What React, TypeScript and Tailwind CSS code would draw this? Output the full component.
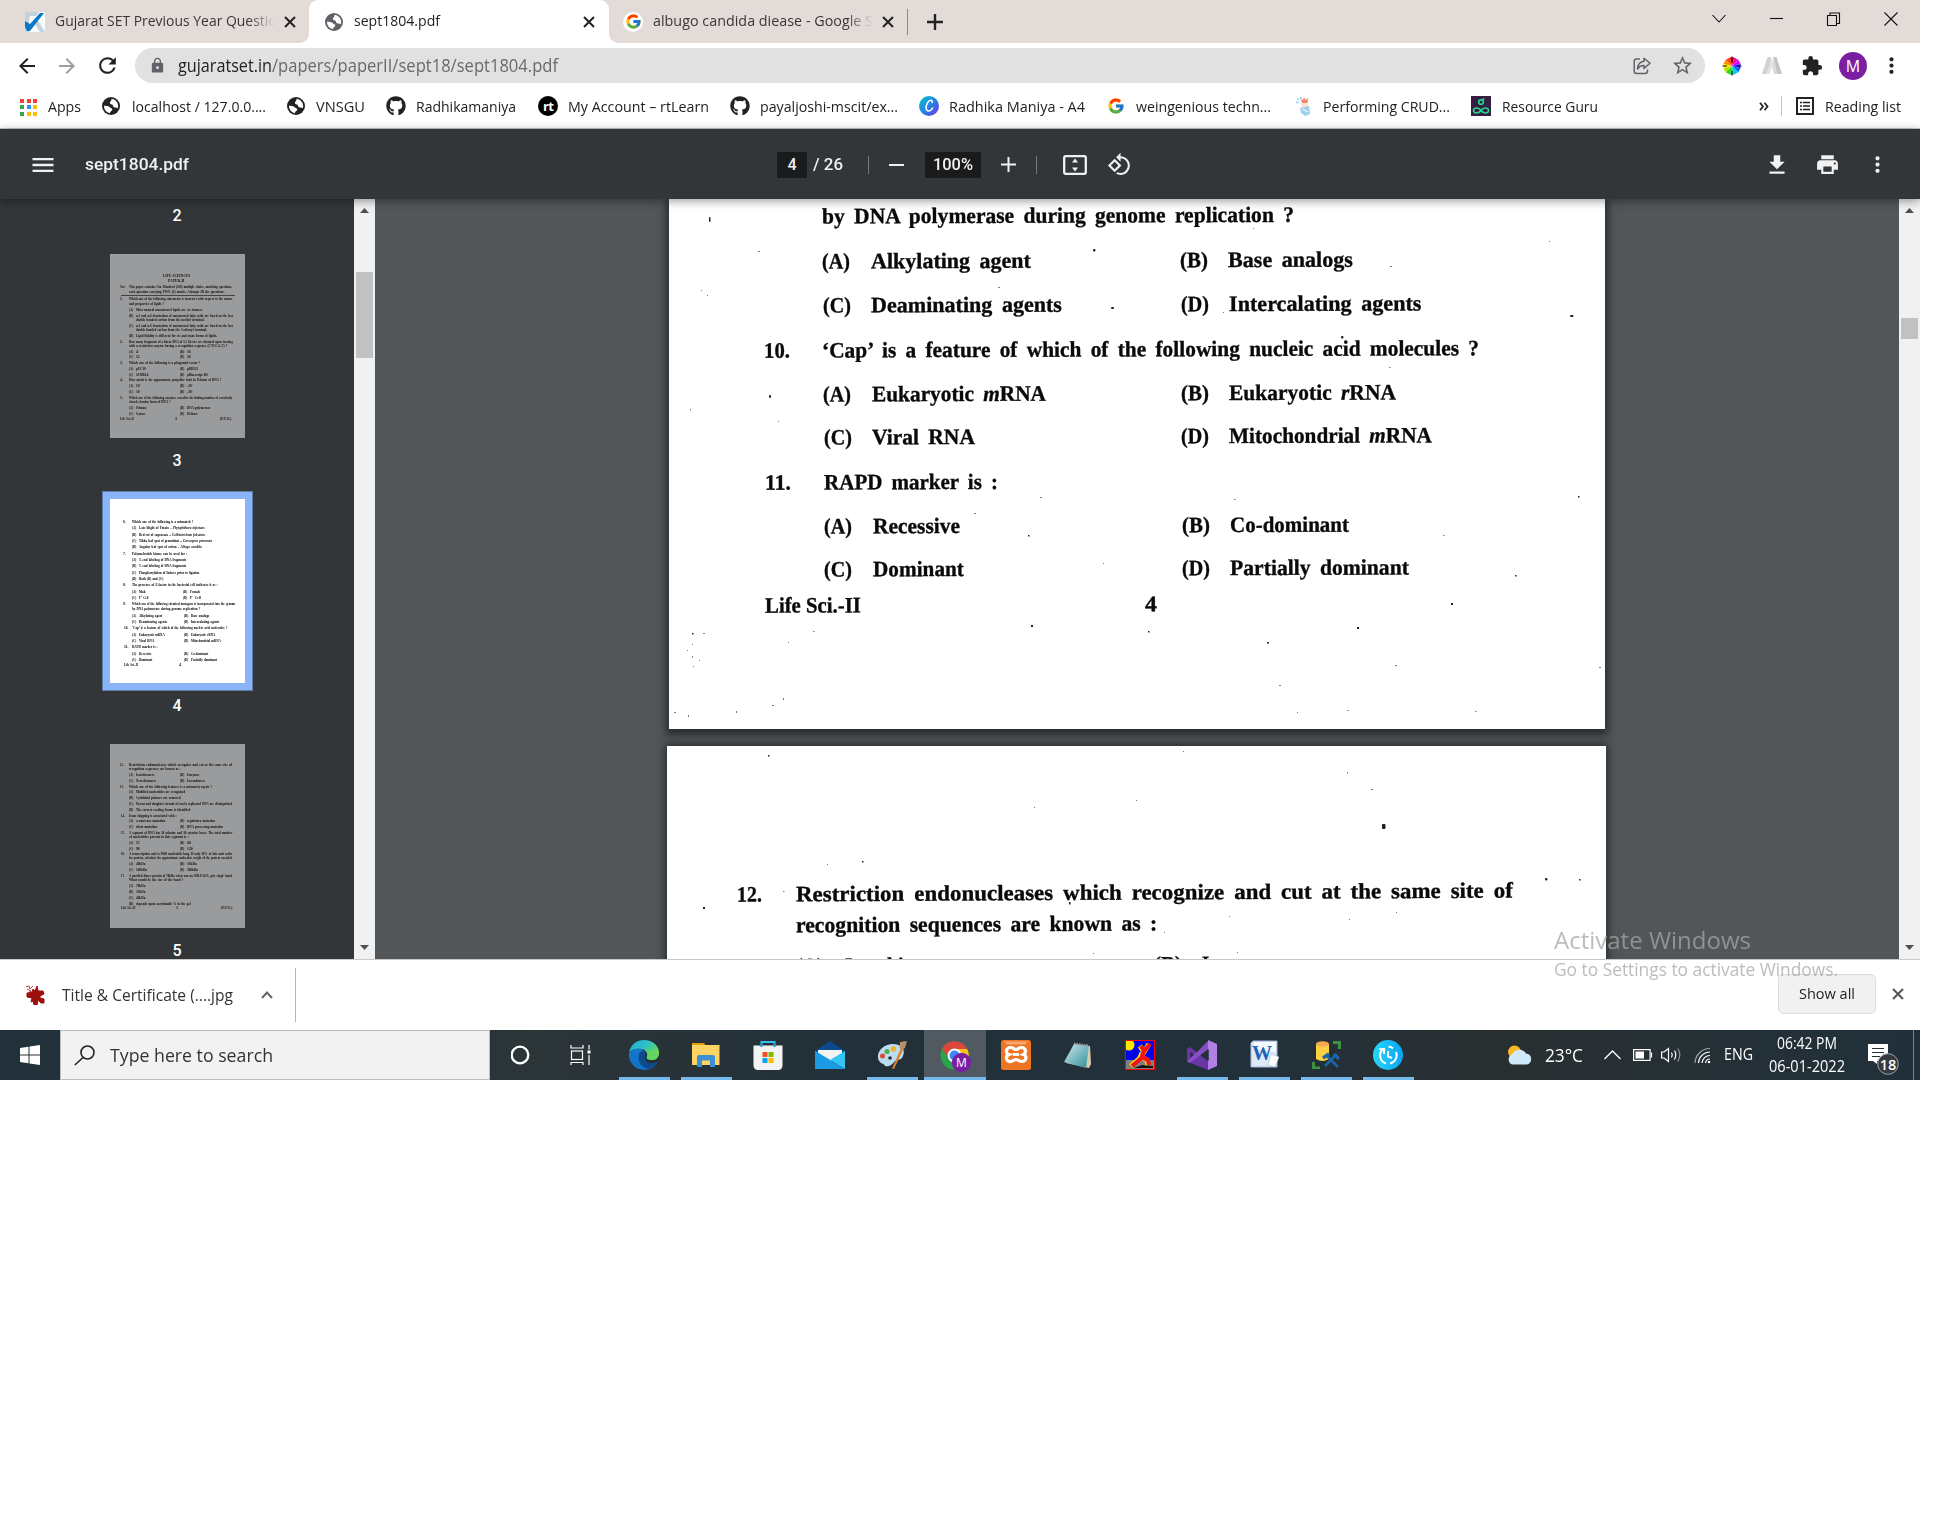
import React, { useLayoutEffect, useRef } from "react";
import { FaGithub } from "react-icons/fa";
import { FcGoogle } from "react-icons/fc";
import {
  MdArrowBack,
  MdArrowForward,
  MdExtension,
  MdFileDownload,
  MdLock,
  MdMenu,
  MdMoreVert,
  MdPrint,
  MdRefresh,
  MdRotate90DegreesCcw,
  MdStarBorder,
} from "react-icons/md";

/* One line of text stretched or squeezed to a given width. */
function Fit({ w, className = "", children }: { w: number; className?: string; children: React.ReactNode }) {
  const ref = useRef<HTMLSpanElement>(null);
  useLayoutEffect(() => {
    const el = ref.current;
    if (!el) return;
    el.style.transform = "none";
    const natural = el.getBoundingClientRect().width;
    if (natural > 0) el.style.transform = `scaleX(${w / natural})`;
  }, [w]);
  return (
    <span className={`block shrink-0 whitespace-nowrap ${className}`} style={{ width: w }}>
      <span ref={ref} className="inline-block origin-left whitespace-pre">
        {children}
      </span>
    </span>
  );
}

type Cell = [x: number, end: number, text: React.ReactNode];
type Line = [y: number, ...cells: Cell[]];

/* Lines of a printed sheet: every line sits on its own centre, cells keep their columns. */
function Sheet({ lines, x0, y0, k = 1, rowClass }: { lines: Line[]; x0: number; y0: number; k?: number; rowClass: string }) {
  let prevY = y0;
  return (
    <>
      {lines.map(([y, ...cells], i) => {
        const mt = (y - prevY) * k;
        prevY = y;
        let prevX = x0;
        return (
          <div key={i} className={`flex h-0 items-center ${rowClass}`} style={{ marginTop: mt }}>
            {cells.map(([a, b, t], j) => {
              const ml = (a - prevX) * k;
              prevX = b;
              return (
                <div key={j} className="shrink-0" style={{ marginLeft: ml }}>
                  <Fit w={(b - a) * k}>{t}</Fit>
                </div>
              );
            })}
          </div>
        );
      })}
    </>
  );
}

const page4: Line[] = [
  [217, [822, 1294, "by DNA polymerase during genome replication ?"]],
  [261.8, [822, 850, "(A)"], [870.6, 1030.6, "Alkylating agent"], [1180, 1208, "(B)"], [1228, 1353, "Base analogs"]],
  [306.3, [822.5, 850.5, "(C)"], [871, 1062, "Deaminating agents"], [1180.5, 1208.5, "(D)"], [1228.5, 1421, "Intercalating agents"]],
  [350.7, [764, 790, "10."], [822, 1479, "‘Cap’ is a feature of which of the following nucleic acid molecules ?"]],
  [395, [823, 851, "(A)"], [872, 1046, <>Eukaryotic <i>m</i>RNA</>], [1181, 1209, "(B)"], [1229, 1396, <>Eukaryotic <i>r</i>RNA</>]],
  [438.2, [823.5, 851.5, "(C)"], [872, 975, "Viral RNA"], [1181, 1209, "(D)"], [1229, 1432, <>Mitochondrial <i>m</i>RNA</>]],
  [483, [765, 791, "11."], [824, 998, "RAPD marker is :"]],
  [526.6, [824, 852, "(A)"], [873, 960, "Recessive"], [1181.5, 1209.5, "(B)"], [1230, 1349, "Co-dominant"]],
  [570, [824, 852, "(C)"], [873, 964, "Dominant"], [1181.5, 1209.5, "(D)"], [1230, 1409, "Partially dominant"]],
  [606, [765, 861, <span className="[word-spacing:0px]">Life Sci.-II</span>], [1145, 1157, "4"]],
];

const page5: Line[] = [
  [894.5, [737, 762, "12."], [795.6, 1512.5, "Restriction endonucleases which recognize and cut at the same site of"]],
  [925.5, [795.6, 1157, "recognition sequences are known as :"]],
  [966.5, [796, 824, "(A)"], [845, 964, "Isoschizomers"], [1154, 1182, "(B)"], [1202, 1275, "Isozymes"]],
];

const specks4: [number, number, number, number][] = [
  [709, 217, 1.5, 5], [758, 251, 2, 1], [1093, 249, 2.5, 2.5], [1111, 307, 3, 2], [1253, 228, 1, 1], [1223, 312, 1, 1],
  [701, 290, 1, 1], [707, 295, 1, 1], [998, 287, 2, 1], [769, 395, 2, 3], [690, 409, 1, 1.5], [778, 421, 1, 1],
  [1040, 497, 2, 1], [974, 513, 2, 1], [1028, 535, 1.5, 1.5], [1234, 499, 1.5, 1], [1103, 563, 1, 1],
  [1031, 625, 2, 2], [1148, 631, 1.5, 1.5], [1267, 642, 2, 1.5], [1279, 685, 2, 1], [692, 633, 1.5, 1.5],
  [703, 633, 2, 1], [692, 644, 1, 1], [687, 650, 1, 1], [692, 656, 1, 1.5], [699, 660, 1, 1], [693, 666, 1, 1],
  [813, 631, 1.5, 1], [788, 642, 1, 1], [772, 705, 2, 1], [783, 698, 1, 2], [736, 711, 1, 2], [674, 712, 2, 1], [688, 715, 1, 2],
  [1549, 241, 1, 1], [1390, 266, 2, 1], [1570, 315, 3.5, 2], [1341, 336, 2.5, 2.5], [1389, 367, 1.5, 1], [1578, 496, 1.5, 1.5],
  [1443, 535, 1.5, 1], [1515, 575, 1.5, 1.5], [1451, 603, 2, 2], [1357, 627, 2, 2], [1395, 665, 2, 1], [1599, 667, 2, 1],
  [1297, 712, 1, 1], [1347, 710, 1.5, 1], [1475, 711, 1.5, 1], [1363, 561, 2, 1.5],
];
const specks5: [number, number, number, number][] = [
  [768, 755, 1.5, 1.5], [1183, 751, 1, 1], [1347, 772, 1, 1.5], [1371, 789, 2, 1], [1136, 800, 1, 1], [1034, 807, 1, 1],
  [1382, 824, 3.5, 5], [827, 864, 1, 1], [862, 861, 1.5, 1.5], [1545, 878, 2.5, 2.5], [1579, 879, 1.5, 1.5], [703, 907, 2, 2],
  [783, 891, 1.5, 1], [1069, 902, 1.5, 2.5], [1349, 919, 1, 1], [1396, 912, 1, 1], [1229, 916, 1, 1], [1164, 932, 1, 1],
  [1093, 953, 1, 1], [1237, 952, 1, 1],
];

function Specks({ items, x0, y0 }: { items: [number, number, number, number][]; x0: number; y0: number }) {
  return (
    <svg className="pointer-events-none absolute inset-0 h-full w-full" fill="#222">
      {items.map(([x, y, w, h], i) => (
        <rect key={i} x={x - x0} y={y - y0} width={w} height={h} rx={w * h > 5 ? 1 : 0} opacity={w * h > 2 ? 1 : 0.6} />
      ))}
    </svg>
  );
}

const thumb3: Line[] = [
  [258, [489, 571, "LIFE SCIENCES"]],
  [274, [504, 553, "PAPER-II"]],
  [292, [361, 380, <i>Note :</i>], [388, 697, "This paper contains One Hundred (100) multiple choice, matching questions,"]],
  [306, [388, 675, "each question carrying TWO (2) marks. Attempt All the questions."]],
  [329, [361, 369, "1."], [386, 697, "Which one of the following statements is incorrect with respect to the nature"]],
  [343, [386, 492, "and properties of lipids ?"]],
  [360, [386, 399, "(A)"], [407, 608, "Most natural unsaturated lipids are cis isomers."]],
  [378, [386, 399, "(B)"], [407, 697, "n-3 and n-6 denotations of unsaturated fatty acids are based on the last"]],
  [391, [407, 612, "double bonded carbon from the methyl terminal."]],
  [408, [386, 399, "(C)"], [407, 697, "n-3 and n-6 denotations of unsaturated fatty acids are based on the last"]],
  [422, [407, 620, "double bonded carbon from the Carboxyl terminal."]],
  [439, [386, 399, "(D)"], [407, 650, "Lipid fluidity is different for cis and trans forms of lipids."]],
  [456, [361, 369, "2."], [386, 697, "How many fragments of a linear DNA of 1.5 kb size are obtained upon treating"]],
  [470, [386, 681, "with a restriction enzyme having a recognition sequence (5'TCGA-3') ?"]],
  [487, [386, 399, "(A)"], [407, 413, "4"], [541, 554, "(B)"], [561, 572, "16"]],
  [504, [386, 399, "(C)"], [407, 418, "12"], [541, 554, "(D)"], [561, 572, "20"]],
  [521, [361, 369, "3."], [386, 600, "Which one of the following is a phagemid vector ?"]],
  [539, [386, 399, "(A)"], [407, 436, "pUC19"], [541, 554, "(B)"], [561, 594, "pBR322"]],
  [556, [386, 399, "(C)"], [407, 444, "λEMBL4"], [541, 554, "(D)"], [561, 624, "pBluescript KS"]],
  [573, [361, 369, "4."], [386, 663, "How much is the approximate propeller twist in B-form of DNA ?"]],
  [591, [386, 399, "(A)"], [407, 421, "16°"], [541, 554, "(B)"], [561, 579, "-16°"]],
  [608, [386, 399, "(C)"], [407, 421, "36°"], [541, 554, "(D)"], [561, 579, "-36°"]],
  [626, [361, 369, "5."], [386, 695, "Which one of the following enzymes can alter the linking number of covalently"]],
  [638, [386, 511, "closed circular form of DNA ?"]],
  [657, [386, 399, "(A)"], [407, 440, "Primase"], [541, 554, "(B)"], [561, 631, "DNA polymerase"]],
  [675, [386, 399, "(C)"], [407, 435, "Gyrase"], [541, 554, "(D)"], [561, 594, "Helicase"]],
  [690, [361, 402, "Life Sci.-II"], [524, 530, "3"], [661, 695, "(P.T.O.)"]],
];

const thumb4: Line[] = [
  [997, [369, 377, "6."], [395, 579, "Which one of the following is a mismatch ?"]],
  [1016, [395, 408, "(A)"], [416, 613, <>Late blight of Potato – <i>Phytophthora infestans</i></>]],
  [1035, [395, 408, "(B)"], [416, 613, <>Red rot of sugarcane – <i>Colletotrichum falcatum</i></>]],
  [1054, [395, 408, "(C)"], [416, 635, <>Tikka leaf spot of groundnut – <i>Cercospora personata</i></>]],
  [1073, [395, 408, "(D)"], [416, 604, <>Angular leaf spot of cotton – <i>Albugo candida</i></>]],
  [1092, [369, 377, "7."], [395, 560, "Polynucleotide kinase can be used for :"]],
  [1111, [395, 408, "(A)"], [416, 558, "3'-end labeling of DNA fragments"]],
  [1130, [395, 408, "(B)"], [416, 558, "5'-end labeling of DNA fragments"]],
  [1149, [395, 408, "(C)"], [416, 597, "Phosphorylation of linkers prior to ligation"]],
  [1168, [395, 408, "(D)"], [416, 489, "Both (B) and (C)"]],
  [1187, [370, 378, "8."], [396, 653, "The presence of F-factor in the bacterial cell indicates it as :"]],
  [1206, [396, 409, "(A)"], [417, 438, "Male"], [550, 563, "(B)"], [571, 602, "Female"]],
  [1225, [396, 409, "(C)"], [417, 445, "F⁺ Cell"], [550, 563, "(D)"], [571, 603, "F⁻ Cell"]],
  [1244, [370, 378, "9."], [396, 707, "Which one of the following chemical mutagens is incorporated into the genome"]],
  [1259, [396, 601, "by DNA polymerase during genome replication ?"]],
  [1278, [396, 409, "(A)"], [417, 487, "Alkylating agent"], [551, 564, "(B)"], [572, 627, "Base analogs"]],
  [1297, [396, 409, "(C)"], [417, 501, "Deaminating agents"], [551, 564, "(D)"], [572, 657, "Intercalating agents"]],
  [1316, [371, 384, "10."], [396, 682, "‘Cap’ is a feature of which of the following nucleic acid molecules ?"]],
  [1335, [396, 409, "(A)"], [417, 494, "Eukaryotic mRNA"], [551, 564, "(B)"], [572, 645, "Eukaryotic rRNA"]],
  [1354, [396, 409, "(C)"], [417, 463, "Viral RNA"], [551, 564, "(D)"], [572, 661, "Mitochondrial mRNA"]],
  [1373, [371, 384, "11."], [396, 473, "RAPD marker is :"]],
  [1392, [396, 409, "(A)"], [418, 456, "Recessive"], [552, 565, "(B)"], [573, 625, "Co-dominant"]],
  [1411, [396, 409, "(C)"], [418, 458, "Dominant"], [552, 565, "(D)"], [573, 651, "Partially dominant"]],
  [1427, [372, 414, "Life Sci.-II"], [536, 542, "4"]],
];

const thumb5: Line[] = [
  [225, [361, 372, "12."], [386, 695, "Restriction endonucleases which recognize and cut at the same site of"]],
  [239, [386, 541, "recognition sequences are known as :"]],
  [257, [386, 399, "(A)"], [407, 462, "Isoschizomers"], [541, 554, "(B)"], [561, 598, "Isozymes"]],
  [274, [386, 399, "(C)"], [407, 467, "Neoschizomers"], [541, 554, "(D)"], [561, 615, "Isocaudomers"]],
  [291, [361, 372, "13."], [386, 635, "Which one of the following features is a mismatch repair ?"]],
  [308, [386, 399, "(A)"], [407, 555, "Modified nucleotides are recognized"]],
  [326, [386, 399, "(B)"], [407, 541, "Cytidinial primers are removed"]],
  [343, [386, 399, "(C)"], [407, 696, "Parent and daughter strands of newly replicated DNA are distinguished"]],
  [360, [386, 399, "(D)"], [407, 570, "The correct reading frame is identified"]],
  [378, [362, 373, "14."], [386, 529, "Exon skipping is associated with :"]],
  [395, [386, 399, "(A)"], [407, 495, "a nonsense mutation"], [541, 554, "(B)"], [561, 645, "regulatory mutation"]],
  [412, [386, 399, "(C)"], [407, 471, "silent mutation"], [541, 554, "(D)"], [561, 669, "RNA processing mutation"]],
  [429, [362, 373, "15."], [386, 696, "A segment of DNA has 30 adenine and 30 cytosine bases. The total number"]],
  [442, [386, 565, "of nucleotides present in this segment is :"]],
  [460, [386, 399, "(A)"], [407, 418, "15"], [541, 554, "(B)"], [561, 573, "60"]],
  [477, [386, 399, "(C)"], [407, 418, "90"], [541, 554, "(D)"], [561, 578, "120"]],
  [494, [362, 373, "16."], [386, 696, "A transcription unit is 9000 nucleotide long. If only 10% of this unit codes"]],
  [507, [386, 696, "for protein, calculate the approximate molecular weight of the protein encoded."]],
  [525, [386, 399, "(A)"], [407, 435, "40kDa"], [541, 554, "(B)"], [561, 590, "33kDa"]],
  [542, [386, 399, "(C)"], [407, 440, "100kDa"], [541, 554, "(D)"], [561, 594, "300kDa"]],
  [560, [362, 373, "17."], [386, 696, "A purified dimer protein of 70kDa when run on SDS-PAGE, give single band."]],
  [573, [386, 549, "What would be the size of the band ?"]],
  [591, [386, 399, "(A)"], [407, 435, "70kDa"]],
  [608, [386, 399, "(B)"], [407, 435, "35kDa"]],
  [626, [386, 399, "(C)"], [407, 435, "40kDa"]],
  [643, [386, 399, "(D)"], [407, 571, "depends upon acrylamide % in the gel"]],
  [657, [362, 405, "Life Sci.-II"], [527, 533, "5"], [664, 698, "(P.T.O.)"]],
];

const THIRD = 1 / 3;
const tiny = "font-['Liberation_Serif'] text-[4.8px] leading-none font-bold [word-spacing:0.5px]";

function CloseX({ s = 12, sw = 2, c = "#222" }: { s?: number; sw?: number; c?: string }) {
  return (
    <svg width={s} height={s} viewBox="0 0 12 12" className="shrink-0" stroke={c} strokeWidth={sw}>
      <path d="M1 1L11 11M11 1L1 11" />
    </svg>
  );
}

function Globe({ className = "" }: { className?: string }) {
  return (
    <svg width="18" height="18" viewBox="0 0 18 18" className={`shrink-0 ${className}`}>
      <circle cx="9" cy="9" r="9" fill="currentColor" />
      <path d="M9.500 1.800C12 2 14.500 3.800 15.500 6C16.300 8 16.400 9.500 15.800 11.200C14.500 10.500 13 11 11.500 9.800C10.500 9 11.500 8 10 7.500C8.500 7.200 7.500 6.500 8 5.200C8.500 4 9.800 4 9.500 1.800z" fill="#fff" />
      <path d="M2 8.800C4 9 6 8.800 7.500 10C8.500 11 10.500 11.300 10.300 12.800C10 14.200 8 14 7.800 16.200C4.500 15.700 1.900 12.500 2 8.800z" fill="#fff" />
    </svg>
  );
}

function TabBar() {
  return (
    <div className="flex h-[43px] items-center bg-[#e3dbd8] text-[15px] text-[#3a3738]">
      <div className="flex w-[309px] shrink-0 items-center pl-[25px]">
        <svg width="20" height="20" viewBox="0 0 20 20" className="shrink-0">
          <rect width="20" height="20" fill="#f7fafc" />
          <path d="M0 0H14L11 4H5L4 8V20H0z" fill="#c5d2da" />
          <path d="M12.500 8L20 20H15L10 12z" fill="#c5d2da" />
          <path d="M0 9L5 12L15 1L19 1L5 19L2 19L0 15z" fill="#0b77c9" />
        </svg>
        <div className="-mt-[2px] ml-[10px] w-[220px] overflow-hidden [mask-image:linear-gradient(to_right,black_88%,transparent)]">
          <Fit w={220}>Gujarat SET Previous Year Questic</Fit>
        </div>
        <span className="ml-[9px]"><CloseX /></span>
      </div>
      <div className="relative flex h-[43px] w-[300px] shrink-0 items-center rounded-t-[9px] bg-white pl-4 text-[#222]">
        <div className="absolute bottom-0 -left-[9px] h-[9px] w-[9px] bg-[radial-gradient(circle_at_0_0,transparent_8.5px,white_9px)]" />
        <div className="absolute -right-[9px] bottom-0 h-[9px] w-[9px] bg-[radial-gradient(circle_at_100%_0,transparent_8.5px,white_9px)]" />
        <Globe className="text-[#5f6368]" />
        <Fit w={86} className="-mt-[2px] ml-[11px]">sept1804.pdf</Fit>
        <span className="ml-[143px]"><CloseX /></span>
      </div>
      <div className="flex w-[298px] shrink-0 items-center pl-[14px]">
        <span className="flex h-5 w-5 shrink-0 items-center justify-center rounded-full bg-white"><FcGoogle size={17} /></span>
        <div className="-mt-[2px] ml-[10px] w-[220px] overflow-hidden [mask-image:linear-gradient(to_right,black_88%,transparent)]">
          <Fit w={220}>albugo candida diease - Google S</Fit>
        </div>
        <span className="ml-[9px]"><CloseX /></span>
      </div>
      <div className="h-[26px] w-[1px] shrink-0 bg-[#8d8887]" />
      <svg width="16" height="16" viewBox="0 0 16 16" className="ml-[19px] shrink-0" stroke="#222" strokeWidth="2.4"><path d="M8 0V16M0 8H16" /></svg>
      <div className="ml-auto flex items-center pr-[22px] pb-[5px]">
        <svg width="186" height="14" viewBox="0 0 186 14" fill="none" stroke="#111" strokeWidth="1.1">
          <path d="M.5 3L7 10L13.500 3" />
          <path d="M58 6.500H71" />
          <path d="M115.500 3.500H124.500V13.500H115.500zM118 3.500V1H127.500V11.500H124.500" />
          <path d="M172.500 .5L185.500 13.500M185.500 .5L172.500 13.500" />
        </svg>
      </div>
    </div>
  );
}

function AddressBar() {
  const hues = ["#ff0000", "#ff00a8", "#d400ff", "#3a1cff", "#0066ff", "#00c8ff", "#00e676", "#35d800", "#b4e000", "#ffe600", "#ff9100", "#ff4a00"];
  return (
    <div className="flex h-[45px] items-center bg-white">
      <MdArrowBack size={24} className="ml-[15px] shrink-0 text-[#222]" />
      <MdArrowForward size={24} className="ml-4 shrink-0 text-[#9d9d9d]" />
      <MdRefresh size={25} className="ml-4 shrink-0 text-[#222]" />
      <div className="ml-[15px] flex h-[35px] w-[1570px] shrink-0 items-center rounded-full bg-[#e1e1e1] text-[17.5px]">
        <MdLock size={17} className="ml-[14px] shrink-0 text-[#5f6368]" />
        <Fit w={94} className="ml-3 text-[#222]">gujaratset.in</Fit>
        <Fit w={286} className="text-[#6a6a6a]">/papers/paperII/sept18/sept1804.pdf</Fit>
        <svg width="18" height="18" viewBox="0 0 18 18" className="ml-auto" fill="none" stroke="#5f6368" strokeWidth="1.5">
          <path d="M7 2H3.500Q1.200 2 1.200 4.500V14Q1.200 16.500 3.500 16.500H12Q14.500 16.500 14.500 14V12.500" />
          <path d="M11 1.200L17 6.300L11 11.400V8.600Q7 8.400 4.500 12Q5 5 11 4.300z" strokeLinejoin="round" />
        </svg>
        <MdStarBorder size={23} className="mr-[11px] ml-5 text-[#5f6368]" />
      </div>
      <svg width="20" height="20" viewBox="-10 -10 20 20" className="ml-[17px] shrink-0">
        {hues.map((c, i) => {
          const a = ((i * 30 - 105) * Math.PI) / 180;
          const b = ((i * 30 - 75) * Math.PI) / 180;
          return <path key={i} fill={c} d={`M0 0L${8.8 * Math.cos(a)} ${8.8 * Math.sin(a)}L${8.8 * Math.cos(b)} ${8.8 * Math.sin(b)}z`} />;
        })}
        <path d="M0 -9.500V-4M0 9.500V5M-9.500 0H-5M9.500 0H5" stroke="#111" strokeWidth="1.200" />
      </svg>
      <svg width="20" height="17" viewBox="0 0 20 17" className="ml-5 shrink-0">
        <path d="M0 17L5.500 0H9L9.500 5L4.500 17z" fill="#d2d2d2" />
        <path d="M4.500 17L9.500 4L10 9L8 17z" fill="#e4e4e4" />
        <path d="M11 0H14.500L20 17H15z" fill="#c4c4c4" />
        <path d="M10.500 1L15 17H12L10 8z" fill="#d8d8d8" />
      </svg>
      <MdExtension size={22} className="ml-[19px] shrink-0 text-[#222]" />
      <span className="ml-4 flex h-7 w-7 shrink-0 items-center justify-center rounded-full bg-[#7b1fa2] text-base text-white">M</span>
      <MdMoreVert size={25} className="ml-[12px] shrink-0 text-[#222]" />
    </div>
  );
}

function BookmarkBar() {
  const apps = ["#f44336", "#f44336", "#f44336", "#34a853", "#2196f3", "#fbbc05", "#34a853", "#fbbc05", "#fbbc05"];
  return (
    <div className="flex h-[41px] shrink-0 items-center border-b border-[#c8c8c8] bg-white pb-[4px] text-[15px] text-[#222]">
      <div className="mt-[2px] ml-5 grid w-[17px] shrink-0 grid-cols-3 gap-[2.500px]">
        {apps.map((c, i) => (
          <span key={i} className="h-[4px] w-[4px]" style={{ backgroundColor: c }} />
        ))}
      </div>
      <Fit w={33} className="ml-[11px]">Apps</Fit>
      <Globe className="ml-[21px]" />
      <Fit w={134} className="ml-3">localhost / 127.0.0....</Fit>
      <Globe className="ml-[21px]" />
      <Fit w={49} className="ml-[11px]">VNSGU</Fit>
      <FaGithub size={20} className="ml-[21px] shrink-0" />
      <Fit w={100} className="ml-[10px]">Radhikamaniya</Fit>
      <span className="ml-[22px] flex h-5 w-5 shrink-0 items-center justify-center rounded-full bg-black text-[13px] leading-none font-bold tracking-tighter text-white">rt</span>
      <Fit w={141} className="ml-[10px]">My Account – rtLearn</Fit>
      <FaGithub size={20} className="ml-[21px] shrink-0" />
      <Fit w={138} className="ml-[10px]">payaljoshi-mscit/ex...</Fit>
      <svg width="20" height="20" viewBox="0 0 20 20" className="ml-[21px] shrink-0">
        <defs>
          <linearGradient id="canva" x1="0" y1="0" x2="1" y2="1">
            <stop offset="0" stopColor="#00c9cc" /><stop offset=".55" stopColor="#2a7de1" /><stop offset="1" stopColor="#7d2ae8" />
          </linearGradient>
        </defs>
        <circle cx="10" cy="10" r="10" fill="url(#canva)" />
        <path d="M13.300 6.500C13.700 3.700 10.600 3.500 8.500 6.800C6.300 10.500 6.600 15 9.600 15C11.600 15 12.900 13.300 13.600 12" fill="none" stroke="#fff" strokeWidth="1.500" strokeLinecap="round" />
      </svg>
      <Fit w={136} className="ml-[10px]">Radhika Maniya - A4</Fit>
      <FcGoogle size={18} className="ml-[22px] shrink-0" />
      <Fit w={135} className="ml-[11px]">weingenious techn...</Fit>
      <svg width="16" height="20" viewBox="0 0 16 20" className="ml-[25px] shrink-0">
        <path d="M6 2Q1 2 1.500 8" fill="none" stroke="#a8dcf2" strokeWidth="2.500" strokeDasharray="2 1" />
        <path d="M8 1L9.500 4L12 2L11.500 7H6L5 3L7 4z" fill="#f0836a" />
        <path d="M5 7H12V12H6z" fill="#fbe3d8" />
        <path d="M4 12L13 10L14 18L9 20L5 17z" fill="#9fd0ee" />
        <path d="M6 13L12 16" stroke="#fff" />
      </svg>
      <Fit w={127} className="ml-[11px]">Performing CRUD...</Fit>
      <svg width="20" height="20" viewBox="0 0 20 20" className="ml-[21px] shrink-0" fill="none" stroke="#1ee08a" strokeWidth="1.600">
        <rect width="20" height="20" fill="#352044" stroke="none" />
        <circle cx="10" cy="6" r="2.300" /><path d="M11.500 4L13 2.500" />
        <path d="M10 14.500C8 11.500 2.500 11 2.500 14.500C2.500 18 8 17.500 10 14.500C12 11.500 17.500 11 17.500 14.500C17.500 18 12 17.500 10 14.500z" />
      </svg>
      <Fit w={96} className="ml-[11px]">Resource Guru</Fit>
      <svg width="10" height="9" viewBox="0 0 10 9" className="ml-[161px] shrink-0" fill="none" stroke="#222" strokeWidth="1.800"><path d="M1 .8L4 4.500L1 8.200M5.500 .8L8.500 4.500L5.500 8.200" /></svg>
      <div className="ml-3 h-5 w-px bg-[#c4c4c4]" />
      <svg width="18" height="18" viewBox="0 0 18 18" className="ml-[14px] shrink-0" fill="none" stroke="#222" strokeWidth="2">
        <rect x="1" y="1" width="16" height="16" /><path d="M7 5.500H14M7 9H14M7 12.500H14M4 5.500H6M4 9H6M4 12.500H6" strokeWidth="1.700" />
      </svg>
      <Fit w={76} className="ml-[11px]">Reading list</Fit>
    </div>
  );
}

function PdfToolbar() {
  return (
    <div className="relative z-10 flex h-[70px] shrink-0 items-center bg-[#323639] pt-px font-['Roboto'] text-[17px] font-medium text-[#f1f1f1] shadow-[0_2px_9px_rgba(0,0,0,0.4)]">
      <MdMenu size={28} className="ml-[29px] shrink-0" />
      <Fit w={104} className="ml-[28px]">sept1804.pdf</Fit>
      <span className="ml-[588px] flex h-[26px] w-[30px] shrink-0 items-center justify-center bg-[#191b1c] text-[16px]">4</span>
      <Fit w={30} className="ml-[6px] text-[16px]">/ 26</Fit>
      <div className="ml-[25px] h-[18px] w-px bg-[#77797b]" />
      <div className="ml-5 h-[2px] w-[15px] shrink-0 bg-[#f1f1f1]" />
      <span className="ml-[21px] flex h-[26px] w-14 shrink-0 items-center justify-center bg-[#191b1c] text-[16px]"><Fit w={40}>100%</Fit></span>
      <svg width="15" height="15" viewBox="0 0 15 15" className="ml-5 shrink-0" stroke="#f1f1f1" strokeWidth="2"><path d="M7.500 0V15M0 7.500H15" /></svg>
      <div className="ml-5 h-[18px] w-px shrink-0 bg-[#77797b]" />
      <svg width="24" height="20" viewBox="0 0 24 20" className="ml-[26px] shrink-0" fill="#f1f1f1">
        <rect x="1.200" y="1.200" width="21.600" height="17.600" rx="1.500" fill="none" stroke="#f1f1f1" strokeWidth="2.300" />
        <path d="M12 3.500L15 7.500H9zM12 16.500L15 12.500H9z" />
      </svg>
      <MdRotate90DegreesCcw size={25} className="ml-[20px] shrink-0" />
      <MdFileDownload size={26} className="ml-auto shrink-0" />
      <MdPrint size={25} className="ml-[25px] shrink-0" />
      <MdMoreVert size={25} className="mr-[30px] ml-[25px] shrink-0" />
    </div>
  );
}

function ScrollBar({ thumb }: { thumb: string }) {
  return (
    <div className="flex h-full w-[21px] shrink-0 flex-col items-center bg-[#f1f1f1]">
      <svg width="9" height="5" viewBox="0 0 9 5" className="mt-[9px] shrink-0" fill="#505050"><path d="M0 5L4.500 0L9 5z" /></svg>
      <div className={`w-[17px] shrink-0 bg-[#c1c1c1] ${thumb}`} />
      <svg width="9" height="5" viewBox="0 0 9 5" className="mt-auto mb-[9px] shrink-0" fill="#505050"><path d="M0 0L4.500 5L9 0z" /></svg>
    </div>
  );
}

function Thumbnails() {
  return (
    <div className="flex w-[354px] shrink-0 flex-col overflow-hidden bg-[#323639] font-['Roboto'] text-[16px] leading-5 font-medium text-white">
      <div className="mt-[7px] flex h-5 w-[354px] shrink-0 justify-center">2</div>
      <div className={`mt-7 ml-[110px] h-[184px] w-[135px] shrink-0 overflow-hidden bg-[#9a9b9d] pt-px text-[#111] ${tiny}`}>
        <div className="-mt-px">
          <Sheet lines={thumb3.slice(0, 4)} x0={330} y0={192} k={THIRD} rowClass="" />
          <div className="mx-[10.500px] mt-[3px] h-px bg-[#444]" />
          <Sheet lines={thumb3.slice(4)} x0={330} y0={318} k={THIRD} rowClass="" />
        </div>
      </div>
      <div className="mt-[13px] flex h-5 w-[354px] shrink-0 justify-center">3</div>
      <div className="mt-[20px] ml-[102px] h-[200px] w-[151px] shrink-0 border border-[#5f7ba8] bg-[#8ab4f8] p-[7px]">
        <div className={`h-[184px] w-[135px] overflow-hidden bg-white pt-px text-black ${tiny}`}>
          <div className="-mt-px">
            <Sheet lines={thumb4} x0={330} y0={927} k={THIRD} rowClass="" />
          </div>
        </div>
      </div>
      <div className="mt-[5px] flex h-5 w-[354px] shrink-0 justify-center">4</div>
      <div className={`mt-7 ml-[110px] h-[184px] w-[135px] shrink-0 overflow-hidden bg-[#9a9b9d] pt-px text-[#111] ${tiny}`}>
        <div className="-mt-px">
          <Sheet lines={thumb5} x0={330} y0={162} k={THIRD} rowClass="" />
        </div>
      </div>
      <div className="mt-[13px] flex h-5 w-[354px] shrink-0 justify-center">5</div>
    </div>
  );
}

const print = "font-['Liberation_Serif'] text-[22px] leading-none font-bold text-[#0a0a0a] [word-spacing:4px] [-webkit-text-stroke:0.35px_#0a0a0a]";

function Viewer() {
  return (
    <div className="flex min-w-0 flex-1 flex-col overflow-hidden bg-[#525659]">
      <div className={`relative ml-[294px] h-[530px] w-[936px] shrink-0 bg-white pt-px shadow-[0_3px_8px_3px_rgba(0,0,0,0.5)] ${print}`}>
        <div className="-mt-px">
          <Sheet lines={page4} x0={669} y0={199} rowClass="origin-left -rotate-[0.2deg]" />
        </div>
        <Specks items={specks4} x0={669} y0={199} />
      </div>
      <div className={`relative mt-[17px] ml-[292px] h-[240px] w-[939px] shrink-0 bg-white pt-px shadow-[0_0_8px_2px_rgba(0,0,0,0.5)] ${print}`}>
        <div className="-mt-px">
          <Sheet lines={page5} x0={667} y0={746} rowClass="origin-left -rotate-[0.3deg]" />
        </div>
        <Specks items={specks5} x0={667} y0={746} />
      </div>
    </div>
  );
}

function DownloadBar() {
  return (
    <div className="flex h-[71px] shrink-0 items-center border-t border-[#c8c8c8] bg-white text-[#333]">
      <svg width="20" height="20" viewBox="0 0 20 20" className="ml-[25px] shrink-0">
        <path d="M2 8L7 7L8 4L10 6L12 1L13 6L18 6L19 9L15 11L15 13L19 14V18L16 18L13 15L12 20L9 20L8 16L6 17L7 13L2 12z" fill="#9d0f0c" stroke="#9d0f0c" strokeLinejoin="round" />
        <path d="M1 2L4 1L5 4L8 1M2 4L6 6L3 8" stroke="#b3423f" fill="none" />
      </svg>
      <Fit w={171} className="ml-[17px] text-[17px]">Title &amp; Certificate (....jpg</Fit>
      <svg width="12" height="8" viewBox="0 0 12 8" className="ml-7 shrink-0" fill="none" stroke="#666" strokeWidth="2"><path d="M1 7L6 1.500L11 7" /></svg>
      <div className="ml-[22px] h-[54px] w-px bg-[#b5b5b5]" />
      <div className="mb-[2px] ml-auto flex h-10 w-[98px] items-center justify-center rounded-[5px] border border-[#dadce0] bg-[#f1f1f1] pb-px text-[15px] text-[#222]">
        <Fit w={56}>Show all</Fit>
      </div>
      <span className="mr-[16px] mb-[2px] ml-4"><CloseX c="#555" /></span>
    </div>
  );
}

function TaskIcon({ open, active, children }: { open?: boolean; active?: boolean; children: React.ReactNode }) {
  return (
    <div className={`relative flex h-[50px] w-[62px] shrink-0 items-center justify-center pr-[2px] ${active ? "bg-[#505a60]" : ""}`}>
      {children}
      {open && <div className={`absolute bottom-0 h-[3px] bg-[#76b9ed] ${active ? "inset-x-0" : "left-[5px] w-[51px]"}`} />}
    </div>
  );
}

function Taskbar() {
  return (
    <div className="flex h-[50px] shrink-0 items-center bg-[linear-gradient(to_right,#21313a,#2c3538_28%,#22303a_45%,#22303a_65%,#292f31_78%,#20303a)] text-white">
      <svg width="20" height="20" viewBox="0 0 20 20" className="ml-5 shrink-0" fill="#fff">
        <path d="M0 3L8.500 1.700V9.500H0zM9.500 1.500L20 0V9.500H9.500zM0 10.500H8.500V18.300L0 17zM9.500 10.500H20V20L9.500 18.500z" />
      </svg>
      <div className="ml-5 flex h-[50px] w-[430px] shrink-0 items-center border border-[#bdbdbd] bg-[#f2f2f2] text-[19px] text-[#333]">
        <svg width="21" height="21" viewBox="0 0 21 21" className="ml-[13px] shrink-0" fill="none" stroke="#222" strokeWidth="1.600"><circle cx="13.500" cy="7.500" r="6.500" /><path d="M9 12.500L.8 20" /></svg>
        <Fit w={163} className="ml-[15px]">Type here to search</Fit>
      </div>
      <TaskIcon><svg width="20" height="20" viewBox="0 0 20 20" className="ml-[2px]"><circle cx="9" cy="10" r="8.300" fill="none" stroke="#fff" strokeWidth="2.300" /></svg></TaskIcon>
      <TaskIcon>
        <svg width="22" height="20" viewBox="0 0 22 20" className="-ml-[2px]" fill="none" stroke="#fff" strokeWidth="1.200">
          <rect x="1.500" y="6" width="11" height="8.500" /><path d="M1 0V3H13V0M1 20V17.500H13V20M19 0V4.500M19 10V20" /><rect x="17.500" y="5.500" width="3" height="3" fill="#fff" stroke="none" />
        </svg>
      </TaskIcon>
      <TaskIcon open>
        <svg width="30" height="30" viewBox="0 0 30 30">
          <defs>
            <linearGradient id="edgeTop" x1="0" y1="0" x2="1" y2=".6"><stop offset="0" stopColor="#27a8dd" /><stop offset=".55" stopColor="#2fc2c5" /><stop offset="1" stopColor="#70e04e" /></linearGradient>
            <linearGradient id="edgeLow" x1="0" y1="0" x2="0" y2="1"><stop offset="0" stopColor="#1478cc" /><stop offset="1" stopColor="#1272c8" /></linearGradient>
          </defs>
          <path d="M0 15A15 15 0 0 0 15 30C21 30 26 27 28.500 22L18 15L10 6L0 13z" fill="url(#edgeLow)" />
          <path d="M0 13C1.500 4 8 0 15 0C25 0 30 7 30 13C30 18 26 20.500 22 20C18.500 19.700 17 18.500 18 16.500C19.500 13 15.500 8.500 10 8.500C5 8.500 1 11 0 13z" fill="url(#edgeTop)" />
          <path d="M10 14C8 20 12 28 20 29C25 27.500 28 24 28.500 22C22 25 15.500 23 15.500 17C15.500 14 17 13 16 12C13.500 10.500 10.800 11.500 10 14z" fill="#0d4a8d" />
          <path d="M18 16.500C17 18.500 18.500 19.700 22 20C26 20.500 28.500 19.300 29.500 17L28.500 22C22 25 15.500 23 15.500 17C15.500 15 16.500 13.500 16.500 12.500C18 13.500 18.500 15 18 16.500z" fill="#22303a" />
          <path d="M18 16.500C17 18.500 18.500 19.700 22 20C26 20.500 29 18.500 29.800 15L20 8z" fill="#62d560" />
        </svg>
      </TaskIcon>
      <TaskIcon open>
        <svg width="28" height="24" viewBox="0 0 28 24">
          <path d="M0 0H12L14 3H0z" fill="#e0a000" /><rect y="2" width="27.500" height="20" fill="#ffd464" />
          <path d="M5 24V14Q5 12 7 12H21Q23 12 23 14V24H18V17.500H10V24z" fill="#3c8fd4" />
        </svg>
      </TaskIcon>
      <TaskIcon>
        <svg width="30" height="30" viewBox="0 0 30 30">
          <path d="M8.500 8V2H21.500V8" fill="none" stroke="#35bdf2" strokeWidth="2" />
          <path d="M.5 5.500H29.500V25Q29.500 30 25 30H5Q.5 30 .5 25z" fill="#f3f3f3" />
          <path d="M8.500 7V3M21.500 7V3" stroke="#1a8fd0" strokeWidth="2" />
          <path d="M9.500 12H14.500V17H9.500z" fill="#f25022" /><path d="M15.500 12H20.500V17H15.500z" fill="#7fba00" /><path d="M9.500 18H14.500V23H9.500z" fill="#00a4ef" /><path d="M15.500 18H20.500V23H15.500z" fill="#ffb900" />
        </svg>
      </TaskIcon>
      <TaskIcon>
        <svg width="30" height="28" viewBox="0 0 30 28">
          <path d="M0 10L15 0L30 10V13H0z" fill="#0b4a8f" /><path d="M3 9H27V20H3z" fill="#f4f4f4" /><path d="M0 10L15 19L0 28z" fill="#1f97e0" /><path d="M30 10L15 19L30 28z" fill="#35c3f3" /><path d="M0 10V28H30L15 19z" fill="#1b9be4" />
        </svg>
      </TaskIcon>
      <TaskIcon open>
        <svg width="31" height="28" viewBox="0 0 31 28">
          <path d="M1 17C0 9 8 3 16 3C24 3 29 8 26 15C24 20 20 18 17 21C15 24 12 26 8 25C7 22 2 23 1 17z" fill="#bcdcf0" />
          <circle cx="5.500" cy="15" r="2.500" fill="#d9483b" /><circle cx="10" cy="10.500" r="2.600" fill="#52b04c" /><circle cx="16.500" cy="8" r="2.800" fill="#f5b32d" /><circle cx="13" cy="17" r="1.800" fill="#22303a" />
          <path d="M24 7L26.500 8L17 28L15 27.500z" fill="#d9822d" /><path d="M23 1L30 0L28 7L25 9L22.500 7z" fill="#b98f68" />
        </svg>
      </TaskIcon>
      <TaskIcon open active>
        <svg width="32" height="32" viewBox="0 0 32 32" className="mt-1 ml-[3px]">
          <circle cx="14.500" cy="14.500" r="14" fill="#2ba24c" />
          <path d="M2 8A14 14 0 0 1 27.500 9H14.500L9 17z" fill="#d9483b" />
          <path d="M28 10A14 14 0 0 1 16 28.500L20 17L15 8H27z" fill="#fbc116" />
          <circle cx="14.500" cy="14.500" r="6" fill="#4285f4" stroke="#fff" strokeWidth="1.800" />
          <circle cx="21.500" cy="21.500" r="9.700" fill="#7b1fa2" />
          <text x="21.500" y="26" textAnchor="middle" fontSize="12" fontFamily="Open Sans" fill="#fff">M</text>
        </svg>
      </TaskIcon>
      <TaskIcon>
        <svg width="30" height="30" viewBox="0 0 30 30">
          <rect width="30" height="30" rx="2.500" fill="#ee7623" /><path d="M3 1.500H27L24 4.500H6z" fill="#f7a871" />
          <path d="M10 7.500C4 7.500 4.500 13.500 8 14.500C4 16 5 22 10 21.500C12.500 21 13 19.500 15 19.500C17 19.500 18 21.500 20.500 21.500C26 21.500 26 15.500 22.500 14.500C25.500 13 25.500 7.500 20 7.500C17.500 7.500 17 9.500 15 9.500C13 9.500 12.500 7.500 10 7.500z" fill="none" stroke="#fff" strokeWidth="3.200" />
          <path d="M12 14.500H18" stroke="#fff" strokeWidth="3" />
        </svg>
      </TaskIcon>
      <TaskIcon>
        <svg width="28" height="27" viewBox="0 0 28 27">
          <defs><linearGradient id="note" x1="0" y1="0" x2="1" y2="1"><stop offset="0" stopColor="#cfe7ec" /><stop offset="1" stopColor="#2e8f9c" /></linearGradient></defs>
          <path d="M10 2L26 4L27 22L25 26L2 21z" fill="#d8cdb0" /><path d="M10 2L25 4L22 26L0 20z" fill="url(#note)" /><path d="M10 1.500L25 3.500" stroke="#999" strokeWidth="2" strokeDasharray="1.500 1" />
        </svg>
      </TaskIcon>
      <TaskIcon>
        <svg width="30" height="30" viewBox="0 0 30 30">
          <rect width="30" height="30" fill="#0404e8" /><rect y="20" width="30" height="10" fill="#808080" /><circle cx="4" cy="5" r="5.500" fill="#ffe800" />
          <path d="M9 28L17 25L28 26V28z" fill="#111" />
          <path d="M15 6L19 12L24 4M17 13L15 18L6 26M16 17L22 20L23 25" fill="none" stroke="#ffe800" strokeWidth="5" /><path d="M16 6L20 12M25 4L18.500 12L16.500 18L7 26M17 17L23 20L24 25" fill="none" stroke="#f01414" strokeWidth="4.200" />
          <rect x=".5" y=".5" width="29" height="29" fill="none" stroke="#f00" />
        </svg>
      </TaskIcon>
      <TaskIcon open>
        <svg width="30" height="30" viewBox="0 0 30 30">
          <path fillRule="evenodd" d="M0 8.500L3 7L22 22V30L21 30L0 21.500zM3.500 12V18L7 15z" fill="#6a35a5" />
          <path d="M0 21.500L3 23L22 8V0L21 0L0 18z" fill="none" />
          <path d="M3 23L22 8.500V0L10 12L3.500 18L0 21.500z" fill="#8a4fc4" />
          <path d="M21 0L30 4V26L21 30V21L21.500 20.500V9.500L21 9z" fill="#b17fe6" />
          <path d="M21.500 9.500V20.500L14.500 15z" fill="#22303a" />
        </svg>
      </TaskIcon>
      <TaskIcon open>
        <svg width="29" height="28" viewBox="0 0 29 28" className="-mt-[3px]">
          <path d="M3 1H27V27H1V3z" fill="#dfe8f5" stroke="#9fb8dd" /><path d="M4 2H26V12L4 9z" fill="#f7faff" />
          <text x="2" y="19.500" fontSize="20" fontWeight="bold" fontFamily="Liberation Serif" fill="#1c62b8">W</text>
          <path d="M21 14L29 17L25 27L18 25z" fill="#fff" stroke="#a8bbd6" strokeWidth=".6" />
        </svg>
      </TaskIcon>
      <TaskIcon open>
        <svg width="29" height="28" viewBox="0 0 29 28">
          <path d="M21 1.500H27.500V8M1.500 21V27H8" fill="none" stroke="#3f9142" strokeWidth="3" />
          <path d="M4 3V18Q10.500 22 17 18V3z" fill="#fbd043" /><ellipse cx="10.500" cy="3" rx="6.500" ry="2.800" fill="#f6a94c" />
          <path d="M13 25L24 14M15 15L26 26" stroke="#1c64a8" strokeWidth="2.600" /><path d="M11 17L17 13M22 13L27 18" stroke="#1c64a8" strokeWidth="3.500" />
        </svg>
      </TaskIcon>
      <TaskIcon open>
        <svg width="30" height="30" viewBox="0 0 30 30">
          <defs><linearGradient id="clk" x1="0" x2="1"><stop offset="0" stopColor="#28d7f7" /><stop offset="1" stopColor="#0aa4f5" /></linearGradient></defs>
          <circle cx="15" cy="15" r="15" fill="url(#clk)" />
          <path d="M10 9A8.500 8.500 0 0 0 13 23.500M17 23.500A8.500 8.500 0 0 0 23 12M20 8.500A8.500 8.500 0 0 0 15.500 6.500M6 9H11V14M15 11V16.500L19 18" fill="none" stroke="#fff" strokeWidth="2" />
        </svg>
      </TaskIcon>

      <svg width="27" height="20" viewBox="0 0 27 20" className="ml-[87px] shrink-0">
        <circle cx="7.500" cy="7" r="6.500" fill="#fbb829" />
        <path d="M5.500 19.500A5.300 5.300 0 0 1 5 9.500A8 8 0 0 1 19 8.500A5.600 5.600 0 0 1 20 19.500z" fill="#cfe8fa" />
      </svg>
      <Fit w={38} className="ml-[11px] text-[18px]">23°C</Fit>
      <svg width="17" height="10" viewBox="0 0 17 10" className="ml-[21px] shrink-0" fill="none" stroke="#fff" strokeWidth="1.300"><path d="M.5 9L8.500 1L16.500 9" /></svg>
      <svg width="20" height="12" viewBox="0 0 20 12" className="ml-3 shrink-0"><rect x=".6" y=".6" width="16.500" height="10.800" fill="none" stroke="#fff" strokeWidth="1.200" /><rect x="2.500" y="2.500" width="8.500" height="7" fill="#fff" /><path d="M18.500 3.500V8.500" stroke="#fff" strokeWidth="1.200" /></svg>
      <svg width="21" height="18" viewBox="0 0 21 18" className="ml-[8px] shrink-0" fill="none" stroke="#fff" strokeWidth="1.200"><path d="M.6 6H3L7.500 2.500V15.500L3 12H.6z" /><path d="M10.500 6.500Q12 9 10.500 11.500M13.500 4.500Q16 9 13.500 13.500" /><path d="M16.800 2.500Q20.800 9 16.800 15.500" stroke="#8b969c" /></svg>
      <svg width="17" height="17" viewBox="0 0 17 17" className="ml-3 shrink-0" fill="none" stroke="#fff" strokeWidth="1.200"><path d="M1 16A15 15 0 0 1 16 1.500" stroke="#9aa5ab" /><path d="M4.500 16A11.500 11.500 0 0 1 16 5M8 16A8 8 0 0 1 16 8.500M11.500 16A4.500 4.500 0 0 1 16 12" /><circle cx="15" cy="15" r="1.300" fill="#fff" stroke="none" /></svg>
      <Fit w={29} className="ml-[13px] text-[15.500px]">ENG</Fit>
      <div className="ml-4 flex w-[76px] shrink-0 flex-col items-center text-[15.500px] leading-[23px]">
        <Fit w={60}>06:42 PM</Fit>
        <Fit w={76}>06-01-2022</Fit>
      </div>
      <svg width="32" height="31" viewBox="0 0 32 31" className="mt-[9px] ml-[23px] shrink-0">
        <path d="M0 0H20V17H9V20L5 17H0z" fill="#fff" /><path d="M4 4.500H16M4 8.500H16M4 12.500H12" stroke="#22303a" strokeWidth="1.200" />
        <circle cx="20" cy="20" r="10.300" fill="#343a3d" stroke="#9aa0a3" strokeWidth="1" />
        <text x="20" y="25.500" textAnchor="middle" fontSize="14.500" fontFamily="Open Sans" fontWeight="600" fill="#fff">18</text>
      </svg>
      <div className="ml-[13px] h-[50px] w-px bg-[#75818a]" />
    </div>
  );
}

export default function App() {
  return (
    <div className="h-[1536px] w-[1936px] overflow-hidden bg-white font-['Open_Sans',sans-serif]">
      <div className="relative flex h-[1080px] w-[1920px] flex-col overflow-hidden">
        <TabBar />
        <AddressBar />
        <BookmarkBar />
        <PdfToolbar />
        <div className="flex h-[760px] shrink-0 overflow-hidden">
          <Thumbnails />
          <ScrollBar thumb="mt-[59px] h-[86px]" />
          <Viewer />
          <ScrollBar thumb="mt-[105px] h-[21px]" />
        </div>
        <DownloadBar />
        <Taskbar />
        <div className="pointer-events-none absolute top-[923px] left-[1554px] text-[#a6a6a6]/75">
          <Fit w={197} className="text-[24px] leading-[33px]">Activate Windows</Fit>
          <Fit w={284} className="text-[17.500px] leading-[27px]">Go to Settings to activate Windows.</Fit>
        </div>
      </div>
    </div>
  );
}
